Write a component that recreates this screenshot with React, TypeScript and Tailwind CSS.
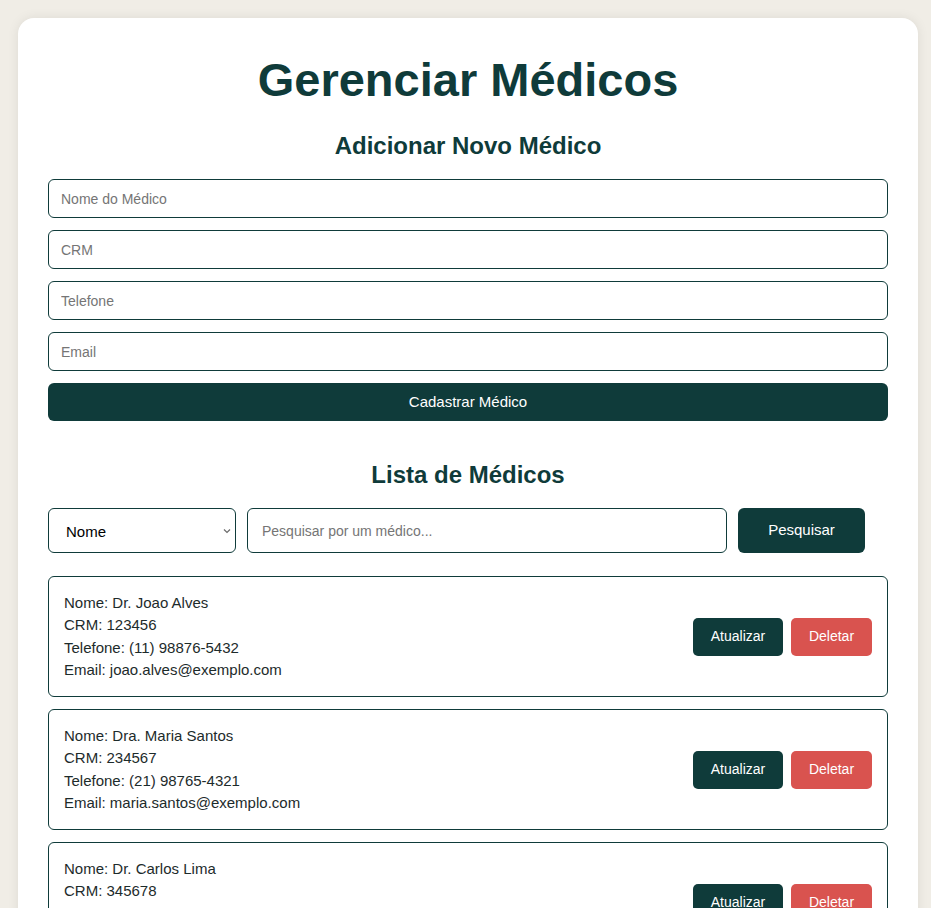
import { useState } from 'react';

const doctors = [
  { nome: 'Dr. Joao Alves', crm: '123456', telefone: '(11) 98876-5432', email: 'joao.alves@exemplo.com' },
  { nome: 'Dra. Maria Santos', crm: '234567', telefone: '(21) 98765-4321', email: 'maria.santos@exemplo.com' },
  { nome: 'Dr. Carlos Lima', crm: '345678', telefone: '(31) 99876-1234', email: 'carlos.lima@exemplo.com' },
];

function App() {
  const [filter, setFilter] = useState('nome');

  return (
    <div className="min-h-screen bg-[#f0ede6] pt-[18px] pl-[18px] font-['Liberation_Sans',Arial,sans-serif]">
      <div className="w-[900px] bg-white rounded-[16px] shadow-[0_0_12px_rgba(0,0,0,0.08)] px-[30px] pt-[30px] pb-[30px]">
        <h1 className="text-center text-[47px] font-bold text-[#0f3b3a] leading-[64px]">
          Gerenciar Médicos
        </h1>

        <h2 className="text-center text-[24px] font-bold text-[#0f3b3a] mt-[20px] leading-[28px]">
          Adicionar Novo Médico
        </h2>

        <form className="mt-[19px] flex flex-col gap-[12px]" onSubmit={(e) => e.preventDefault()}>
          {['Nome do Médico', 'CRM', 'Telefone', 'Email'].map((p) => (
            <input
              key={p}
              placeholder={p}
              className="h-[39px] w-full border border-[#0f3b3a] rounded-[6px] px-[12px] text-[14px] text-black placeholder:text-[#757575] outline-none"
            />
          ))}
          <button className="h-[38px] w-full bg-[#0f3b3a] text-white text-[15px] rounded-[6px]">
            Cadastrar Médico
          </button>
        </form>

        <h2 className="text-center text-[24px] font-bold text-[#0f3b3a] mt-[40px] leading-[28px]">
          Lista de Médicos
        </h2>

        <div className="mt-[19px] flex items-center gap-[11px]">
          <div className="relative w-[188px]">
            <select
              value={filter}
              onChange={(e) => setFilter(e.target.value)}
              className="appearance-none h-[45px] w-full border border-[#0f3b3a] rounded-[6px] pl-[17px] pr-[20px] pt-[3px] text-[15px] text-black bg-white outline-none"
            >
              <option value="nome">Nome</option>
              <option value="crm">CRM</option>
            </select>
            <svg
              className="absolute right-[5px] top-[20px] pointer-events-none"
              width="8"
              height="6"
              viewBox="0 0 8 6"
              fill="none"
            >
              <path d="M1 1.5 L4 4.5 L7 1.5" stroke="#6b6b6b" strokeWidth="1.2" />
            </svg>
          </div>
          <input
            placeholder="Pesquisar por um médico..."
            className="h-[45px] w-[480px] border border-[#0f3b3a] rounded-[6px] px-[14px] text-[14px] placeholder:text-[#757575] outline-none"
          />
          <button className="h-[45px] w-[127px] bg-[#0f3b3a] text-white text-[15px] rounded-[6px]">
            Pesquisar
          </button>
        </div>

        <div className="mt-[23px] flex flex-col gap-[12px]">
          {doctors.map((d) => (
            <div
              key={d.crm}
              className="border border-[#0f3b3a] rounded-[6px] px-[15px] py-[15px] flex items-center justify-between"
            >
              <div className="text-[15px] leading-[22.25px] text-[#1d2b2b]">
                <p>Nome: {d.nome}</p>
                <p>CRM: {d.crm}</p>
                <p>Telefone: {d.telefone}</p>
                <p>Email: {d.email}</p>
              </div>
              <div className="flex gap-[8px]">
                <button className="h-[38px] w-[90px] bg-[#0f3b3a] text-white text-[14px] rounded-[5px]">
                  Atualizar
                </button>
                <button className="h-[38px] w-[81px] bg-[#d9534f] text-white text-[14px] rounded-[5px]">
                  Deletar
                </button>
              </div>
            </div>
          ))}
        </div>
      </div>
    </div>
  );
}

export default App;
